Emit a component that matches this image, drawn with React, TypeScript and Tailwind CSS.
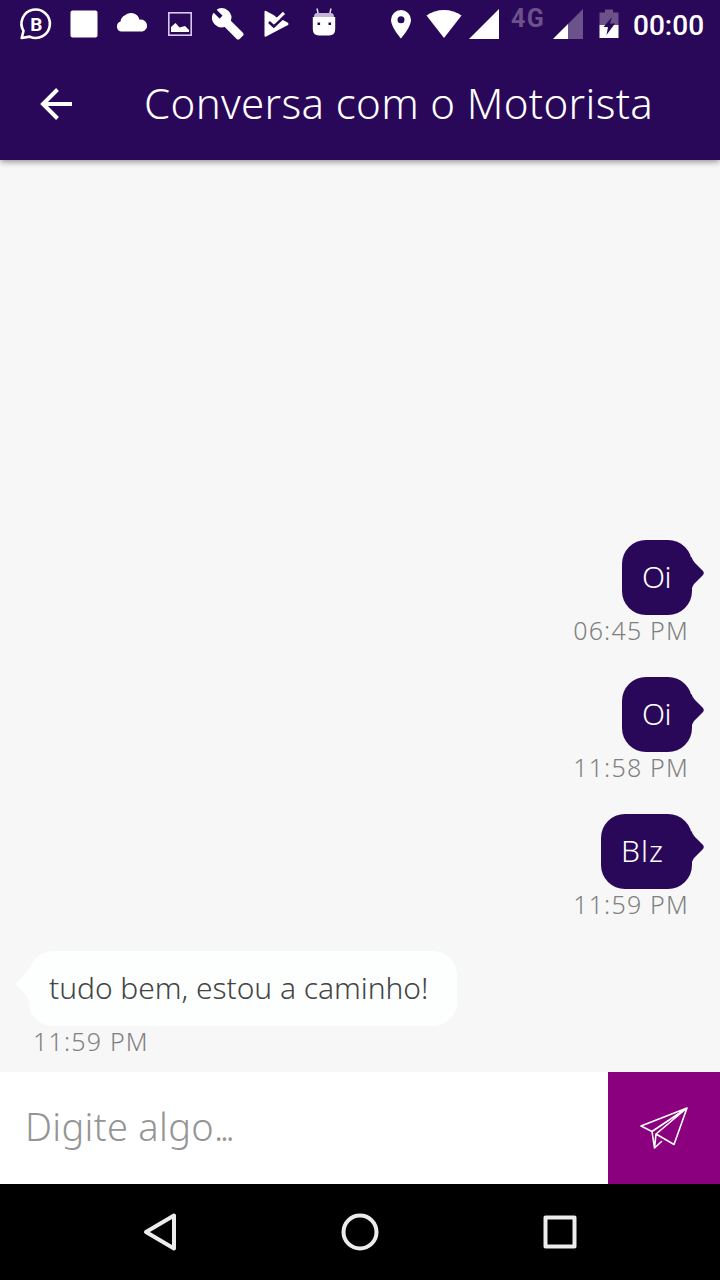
import type { ReactNode } from 'react'

const messages = [
  { text: 'Oi', time: '06:45 PM', mine: true, spacing: 'w-[70px] tracking-[-0.5px]' },
  { text: 'Oi', time: '11:58 PM', mine: true, spacing: 'w-[70px] tracking-[-0.5px]' },
  { text: 'Blz', time: '11:59 PM', mine: true, spacing: 'w-[91px] tracking-[1px]' },
  { text: 'tudo bem, estou a caminho!', time: '11:59 PM', mine: false, spacing: 'w-[428px] tracking-[-0.05px]' },
]

function StatusIcon({ children }: { children: ReactNode }) {
  return (
    <svg viewBox="0 0 48 48" className="size-12 shrink-0" fill="white">
      {children}
    </svg>
  )
}

function StatusBar() {
  return (
    <div className="flex h-12 items-center pl-3">
      <StatusIcon>
        <path d="M9.700 38L11.500 31A14.200 14.200 0 1 1 17.700 36.600Z" fill="none" stroke="white" strokeWidth="2.600" strokeLinejoin="round" />
        <text x="24.200" y="30.500" textAnchor="middle" className="font-['Roboto',sans-serif] text-[19px] font-bold">B</text>
      </StatusIcon>
      <StatusIcon>
        <rect x="10.500" y="10.500" width="27" height="27" rx="2" />
      </StatusIcon>
      <StatusIcon>
        <path d="M13 31.500A5.200 5.200 0 0 1 12.500 21.500A8 8 0 0 1 16.500 15.500A9 9 0 0 1 31.500 19.800A6 6 0 0 1 34.500 31.500Z" />
      </StatusIcon>
      <StatusIcon>
        <rect x="12.800" y="12.800" width="22.400" height="22.400" fill="none" stroke="#d9c8ee" strokeWidth="1.600" />
        <path d="M15 32V27L19.500 23L23.500 27.500L29 26L33 30V32Z" />
      </StatusIcon>
      <StatusIcon>
        <path
          transform="translate(7.500 7.500) scale(1.360)"
          stroke="white"
          strokeWidth="1.200"
          strokeLinejoin="round"
          d="M22.700 19l-9.100-9.100c.9-2.300.4-5-1.500-6.900-2-2-5-2.400-7.400-1.300L9 6 6 9 1.600 4.700C.4 7.100.9 10.100 2.900 12.100c1.900 1.900 4.600 2.400 6.900 1.500l9.100 9.100c.4.4 1 .4 1.400 0l2.300-2.300c.5-.4.5-1.100.1-1.400z"
        />
      </StatusIcon>
      <StatusIcon>
        <path d="M12.500 12Q12.500 10.300 14.100 11.100L35.500 22.500Q37.500 24 35.500 25.300L14.100 36.600Q12.500 37.400 12.500 35.500Z" />
        <path d="M22 15L24.500 17.500L30 11.500L36 15L33 19L29 17Z" fill="#2a0859" />
        <path d="M17 22L21.800 26.500L33 16" fill="none" stroke="#2a0859" strokeWidth="2.600" />
        <path d="M21.800 22.600L32 12.800" fill="none" stroke="white" strokeWidth="3" />
      </StatusIcon>
      <StatusIcon>
        <path d="M17 8.500L18.500 15M31 8.500L29.500 15" stroke="#e5d9f2" strokeWidth="1.500" />
        <path d="M14 17Q14 13 17 13H31Q34 13 34 17Z" fill="#c5b6d6" />
        <path d="M12.800 17H35.200V29Q35.200 35.500 29 35.500H19Q12.800 35.500 12.800 29Z" />
        <path d="M17.500 22.500h2.600v2.600h-2.600zM28.500 22.500h2.600v2.600h-2.600z" fill="#2a0859" />
      </StatusIcon>

      <svg viewBox="0 0 20 30" className="ml-[43px] h-[30px] w-5 shrink-0" fill="white">
        <path fillRule="evenodd" d="M10 1A10 10 0 0 0 0 11C0 18 10 29.500 10 29.500S20 18 20 11A10 10 0 0 0 10 1ZM10 7.200A3.500 3.500 0 1 1 10 14.200A3.500 3.500 0 1 1 10 7.200Z" />
      </svg>
      <svg viewBox="0 0 36 30" className="ml-[15px] h-[30px] w-9 shrink-0" fill="white">
        <path d="M18 29L.5 6.500C10 -1 26 -1 35.500 6.500Z" />
      </svg>
      <svg viewBox="0 0 30 30" className="ml-[7px] size-[30px] shrink-0" fill="white">
        <path d="M30 0V30H0Z" />
      </svg>
      <span className="mb-[11px] ml-[12px] w-[35px] font-['Roboto',sans-serif] text-[25px] leading-6 font-bold tracking-[1.500px] text-[#6b528b]">4G</span>
      <svg viewBox="0 0 30 30" className="ml-[7px] size-[30px] shrink-0">
        <path d="M30 0V30H0Z" fill="#6b528b" />
        <path d="M15 15V30H0Z" fill="white" />
      </svg>
      <svg viewBox="0 0 20 30" className="ml-[16px] h-[30px] w-5 shrink-0">
        <path d="M.5 3.500H6V.5H14V3.500H19.500V16H.5Z" fill="#6b528b" />
        <path d="M.5 16H19.500V29H.5Z" fill="white" />
        <path d="M13 8L4.500 18H9L7.500 26L16 14.500H11Z" fill="#2a0859" />
      </svg>
      <span className="mt-1 ml-3.5 font-['Roboto',sans-serif] text-[28px] leading-8 font-medium text-white">00:00</span>
    </div>
  )
}

function Header() {
  return (
    <header className="z-10 h-40 shrink-0 bg-[#2a0859] shadow-[0_2px_6px_rgba(0,0,0,0.4)]">
      <StatusBar />
      <div className="flex h-28 items-center pl-10">
        <svg viewBox="0 0 32 32" className="size-8 shrink-0" fill="none" stroke="white" strokeWidth="4">
          <path d="M32 16H3M17.500 1.500L3 16L17.500 30.500" />
        </svg>
        <h1 className="mb-0.5 ml-[72px] text-[42px] leading-[56px] font-light tracking-[0.350px] whitespace-nowrap text-white">Conversa com o Motorista</h1>
      </div>
    </header>
  )
}

function Message({ text, time, mine, spacing }: (typeof messages)[number]) {
  return (
    <div className={mine ? 'flex h-[137px] flex-col items-end pr-7' : 'flex h-[121px] flex-col items-start pl-[29px]'}>
      <div
        className={`relative h-[75px] rounded-[24px] pl-5 text-[30px] leading-[74px] font-light whitespace-nowrap ${spacing} ${
          mine ? 'bg-[#2a0859] text-white' : 'bg-[#fdfefe] text-[#444]'
        }`}
      >
        {text}
        <svg
          viewBox="0 0 14 34"
          className={`absolute top-4 h-[34px] w-3.5 ${mine ? '-right-3' : '-left-[13px] -scale-x-100'}`}
          fill={mine ? '#2a0859' : '#fdfefe'}
        >
          <path d="M0 2L1.500 1Q2.500 4.500 5 7L13 15Q14.500 17 13 19L4 28Q2 31 1.500 34H0Z" />
        </svg>
      </div>
      <span className={`text-[25px] leading-[30px] font-light tracking-[1.200px] whitespace-nowrap text-[#808080] ${mine ? 'mr-[3px]' : 'ml-1'}`}>{time}</span>
    </div>
  )
}

function Composer() {
  return (
    <div className="flex h-28 shrink-0 bg-white">
      <div className="flex-1 pl-[25px] text-[38px] leading-[109px] font-light tracking-[0.300px] text-[#959595]">
        Digite algo<span className="tracking-[-3.500px]">...</span>
      </div>
      <button className="flex w-28 items-center justify-center bg-[#8b007f]">
        <svg viewBox="0 0 48 44" className="size-12" fill="none" stroke="white" strokeWidth="1.600" strokeLinejoin="round" strokeLinecap="round">
          <path d="M47 2L1 20L12 25.500L47 2L16 28L34 38.500L47 2M12 25.500L14.500 42L21.500 35.500M16 28L14.500 42" />
        </svg>
      </button>
    </div>
  )
}

function NavBar() {
  return (
    <nav className="flex h-24 shrink-0 items-center justify-center gap-[152px] bg-black">
      <svg viewBox="0 0 48 48" className="size-12" fill="none" stroke="#ececec" strokeWidth="4" strokeLinejoin="round">
        <path d="M38 7.500V40.500L10 24Z" />
      </svg>
      <svg viewBox="0 0 48 48" className="size-12" fill="none" stroke="#ececec" strokeWidth="4">
        <circle cx="24" cy="24" r="16.500" />
      </svg>
      <svg viewBox="0 0 48 48" className="size-12" fill="none" stroke="#ececec" strokeWidth="4" strokeLinejoin="round">
        <rect x="9.500" y="9.500" width="29" height="29" />
      </svg>
    </nav>
  )
}

export default function App() {
  return (
    <div className="flex h-[1280px] w-[720px] flex-col overflow-hidden bg-[#f7f7f7] font-['Noto_Sans','Open_Sans',sans-serif]">
      <Header />
      <main className="flex flex-1 flex-col justify-end">
        {messages.map((m, i) => (
          <Message key={i} {...m} />
        ))}
      </main>
      <Composer />
      <NavBar />
    </div>
  )
}
